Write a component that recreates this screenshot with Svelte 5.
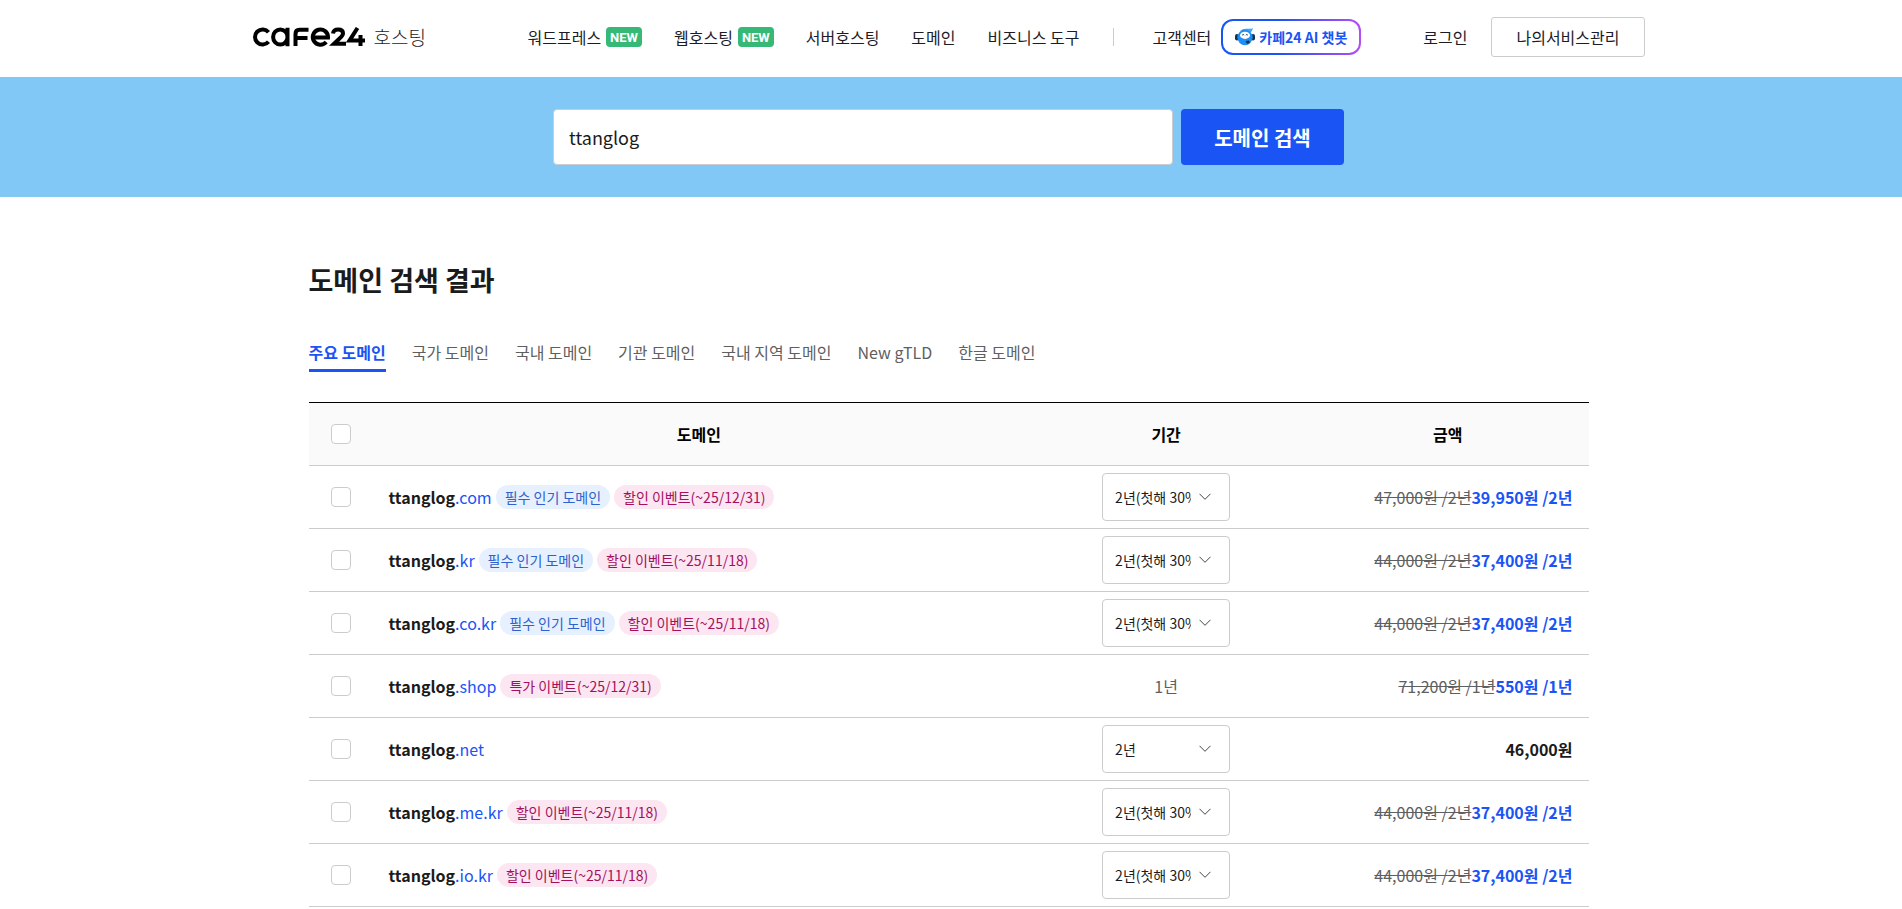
<script lang="ts">
  type Tag = { kind: "popular" | "event"; text: string };
  type Row = {
    ext: string;
    tags: Tag[];
    period: string;
    options: string[];
    before: string;
    price: string;
  };

  const popular: Tag = { kind: "popular", text: "필수 인기 도메인" };
  const sale = (date: string): Tag => ({ kind: "event", text: `할인 이벤트(~${date})` });
  const saleOptions = ["2년(첫해 30% 할인)", "1년"];

  const menus = [
    { name: "워드프레스", isNew: true },
    { name: "웹호스팅", isNew: true },
    { name: "서버호스팅", isNew: false },
    { name: "도메인", isNew: false },
    { name: "비즈니스 도구", isNew: false },
  ];

  const tabs = [
    "주요 도메인",
    "국가 도메인",
    "국내 도메인",
    "기관 도메인",
    "국내 지역 도메인",
    "New gTLD",
    "한글 도메인",
  ];

  const rows: Row[] = [
    { ext: ".com", tags: [popular, sale("25/12/31")], period: "", options: saleOptions, before: "47,000원 /2년", price: "39,950원 /2년" },
    { ext: ".kr", tags: [popular, sale("25/11/18")], period: "", options: saleOptions, before: "44,000원 /2년", price: "37,400원 /2년" },
    { ext: ".co.kr", tags: [popular, sale("25/11/18")], period: "", options: saleOptions, before: "44,000원 /2년", price: "37,400원 /2년" },
    { ext: ".shop", tags: [{ kind: "event", text: "특가 이벤트(~25/12/31)" }], period: "1년", options: [], before: "71,200원 /1년", price: "550원 /1년" },
    { ext: ".net", tags: [], period: "", options: ["2년", "1년"], before: "", price: "46,000원" },
    { ext: ".me.kr", tags: [sale("25/11/18")], period: "", options: saleOptions, before: "44,000원 /2년", price: "37,400원 /2년" },
    { ext: ".io.kr", tags: [sale("25/11/18")], period: "", options: saleOptions, before: "44,000원 /2년", price: "37,400원 /2년" },
  ];

  let keyword = $state("ttanglog");
  let searched = $state("ttanglog");
  let activeTab = $state(0);
  let checked = $state(rows.map(() => false));
  let allChecked = $derived(checked.every(Boolean));

  function toggleAll() {
    const next = !allChecked;
    checked = rows.map(() => next);
  }

  function search(event: SubmitEvent) {
    event.preventDefault();
    searched = keyword.trim();
  }
</script>

<header class="header">
  <div class="header-inner">
    <a class="logo" href="#home" aria-label="cafe24 호스팅">
      <svg width="113" height="20" viewBox="0 0 113 20" fill="none" stroke="#000" stroke-width="4" aria-hidden="true">
        <path d="M15.500 5.200A7.600 7.600 0 1 0 15.500 14.800" />
        <path d="M34.500 .8V19.200M34.500 10A7.200 7.600 0 1 0 20.100 10A7.200 7.600 0 1 0 34.500 10" />
        <path d="M42.500 19V7Q42.500 2.800 46.500 2.800H55.500M42.500 11H54.500" />
        <path d="M59.500 10.400H75A7.600 7.600 0 1 0 73.200 15" />
        <path d="M80 6.500Q80.500 2.500 85.200 2.500Q90 2.500 90 6.200Q90 8.500 86.500 11.500L81 16.800H93" />
        <path d="M104.500 1L96.500 13.600H112M107.500 8V19" />
      </svg>
      <span>호스팅</span>
    </a>
    <nav class="menu" aria-label="주 메뉴">
      {#each menus as menu}
        <a href="#menu">
          {menu.name}
          {#if menu.isNew}<em class="new">NEW</em>{/if}
        </a>
      {/each}
    </nav>
    <div class="support">
      <a href="#support">고객센터</a>
      <button type="button" class="chatbot">
        <svg width="20" height="18" viewBox="0 0 20 18" aria-hidden="true">
          <rect x="0" y="6" width="4" height="6.500" rx="2" fill="#13324f" />
          <rect x="16" y="6" width="4" height="6.500" rx="2" fill="#13324f" />
          <path d="M5 3Q8 .5 12 .8Q15 1 18 .2Q17.500 3 15 5Z" fill="#3fa9ff" />
          <ellipse cx="10" cy="9.400" rx="7.600" ry="7.800" fill="#1e90f5" />
          <ellipse cx="10" cy="7.300" rx="5" ry="3.600" fill="#fff" />
          <path d="M7.200 7.200Q8.200 5.600 9.200 7.200M10.800 7.200Q11.800 5.600 12.800 7.200" fill="none" stroke="#13324f" />
          <path d="M10.500 13L14 12.500L14.800 15L12 15.800Z" fill="#13324f" />
        </svg>
        카페24 AI 챗봇
      </button>
    </div>
    <div class="account">
      <a href="#login">로그인</a>
      <a class="my-service" href="#my">나의서비스관리</a>
    </div>
  </div>
</header>

<form class="search" onsubmit={search}>
  <input type="text" aria-label="도메인 이름" bind:value={keyword} />
  <button type="submit">도메인 검색</button>
</form>

<main class="content">
  <div class="result">
    <h1>도메인 검색 결과</h1>
    <nav class="tabs" aria-label="도메인 분류">
      {#each tabs as tab, i}
        <button type="button" class:active={activeTab === i} onclick={() => (activeTab = i)}>{tab}</button>
      {/each}
    </nav>

    <table>
      <colgroup>
        <col class="col-check" />
        <col />
        <col class="col-period" />
        <col class="col-price" />
      </colgroup>
      <thead>
        <tr>
          <th><input type="checkbox" aria-label="전체 선택" checked={allChecked} onchange={toggleAll} /></th>
          <th>도메인</th>
          <th>기간</th>
          <th>금액</th>
        </tr>
      </thead>
      <tbody>
        {#each rows as row, i}
          <tr>
            <td>
              <input type="checkbox" id="domain-{i}" bind:checked={checked[i]} />
            </td>
            <td>
              <div class="domain">
                <label for="domain-{i}"><strong>{searched}</strong>{row.ext}</label>
                {#each row.tags as tag}
                  <span class="tag {tag.kind}">{tag.text}</span>
                {/each}
              </div>
            </td>
            <td class="period">
              {#if row.options.length}
                <select aria-label="{searched}{row.ext} 기간">
                  {#each row.options as option}
                    <option>{option}</option>
                  {/each}
                </select>
              {:else}
                {row.period}
              {/if}
            </td>
            <td class="price">
              {#if row.before}<del>{row.before}</del>{/if}<strong class:sale={row.before}>{row.price}</strong>
            </td>
          </tr>
        {/each}
      </tbody>
    </table>
  </div>
</main>

<style>
  :global(body) {
    margin: 0;
    background: #fff;
    color: #1b1b1b;
    font-family: "Noto Sans CJK KR", "Noto Sans", sans-serif;
    font-size: 16px;
    line-height: 24px;
  }

  :global(*) {
    box-sizing: border-box;
  }

  a {
    color: inherit;
    text-decoration: none;
  }

  button,
  input,
  select {
    font-family: inherit;
  }

  button {
    cursor: pointer;
  }

  .header,
  .search,
  .content {
    padding-right: 5px;
  }

  .header-inner {
    display: flex;
    align-items: center;
    max-width: 1392px;
    height: 77px;
    margin: 0 auto;
    padding-bottom: 3px;
    color: #1c1c28;
    font-size: 16px;
  }

  .header a {
    white-space: nowrap;
  }

  .logo {
    display: flex;
    align-items: center;
    gap: 8px;
    width: 275px;
    font-size: 19px;
    font-weight: 300;
  }

  .menu {
    display: flex;
    gap: 32px;
  }

  .menu a {
    display: flex;
    align-items: center;
    gap: 5px;
  }

  .new {
    height: 20px;
    padding: 0 4px;
    border-radius: 4px;
    background: #36b876;
    color: #fff;
    font: 700 13px/21px Roboto, sans-serif;
  }

  .support {
    display: flex;
    align-items: center;
    gap: 10px;
    margin-left: 34px;
  }

  .support::before {
    content: "";
    width: 1px;
    height: 18px;
    margin-right: 28px;
    background: #ccc;
  }

  .chatbot {
    display: flex;
    align-items: center;
    gap: 4px;
    height: 36px;
    padding: 0 12px;
    border: 2px solid transparent;
    border-radius: 12px;
    background:
      linear-gradient(#fff, #fff) padding-box,
      linear-gradient(90deg, #1a54f5 40%, #b44df5) border-box;
    color: #1a54f5;
    font-size: 14px;
    font-weight: 700;
    white-space: nowrap;
  }

  .account {
    display: flex;
    align-items: center;
    gap: 24px;
    margin-left: auto;
  }

  .my-service {
    padding: 7px 24px;
    border: 1px solid #ccc;
    border-radius: 3px;
  }

  .search {
    display: flex;
    justify-content: center;
    gap: 8px;
    padding-top: 32px;
    padding-bottom: 32px;
    background: #82c8f7;
  }

  .search input {
    flex: 0 1 620px;
    min-width: 0;
    height: 56px;
    padding: 0 15px;
    border: 1px solid #ccc;
    border-radius: 4px;
    color: #1b1b1b;
    font-size: 18px;
  }

  .search button {
    width: 163px;
    border: 0;
    border-radius: 4px;
    background: #1a54f5;
    color: #fff;
    font-size: 20px;
    font-weight: 700;
  }

  .result {
    max-width: 1280px;
    margin: 0 auto;
    padding: 63px 0;
  }

  h1 {
    margin: 0;
    font-size: 27px;
    line-height: 40px;
  }

  .tabs {
    display: flex;
    gap: 26px;
    margin: 38px 0 30px;
  }

  .tabs button {
    padding: 2px 0 5px;
    border: 0;
    border-bottom: 3px solid transparent;
    background: none;
    color: #5f5f5f;
    font-size: 16px;
    line-height: 24px;
  }

  .tabs .active {
    border-color: #1a54f5;
    color: #1a54f5;
    font-weight: 700;
  }

  table {
    width: 100%;
    border-top: 1px solid #000;
    border-spacing: 0;
    table-layout: fixed;
  }

  .col-check {
    width: 64px;
  }

  .col-period,
  .col-price {
    width: 22%;
  }

  th,
  td {
    height: 63px;
    padding: 0 16px;
    border-bottom: 1px solid #ccc;
  }

  th {
    background: #fafafa;
    color: #000;
    font-weight: 700;
  }

  input[type="checkbox"] {
    display: block;
    width: 20px;
    height: 20px;
    margin: 0 auto;
    border: 1px solid #ccc;
    border-radius: 4px;
    background: #fff;
    appearance: none;
  }

  input[type="checkbox"]:checked {
    border-color: #1a54f5;
    background: #1a54f5;
  }

  .domain {
    display: flex;
    align-items: center;
    gap: 4px;
  }

  .domain label {
    color: #1a54f5;
  }

  .domain strong {
    color: #1b1b1b;
  }

  .tag {
    padding: 0 9px;
    border-radius: 12px;
    font-size: 14px;
  }

  .popular {
    background: #e6f0ff;
    color: #2f62cc;
  }

  .event {
    background: #fce6f1;
    color: #a3105f;
  }

  .period {
    color: #5f5f5f;
    text-align: center;
  }

  select {
    display: block;
    width: 128px;
    height: 48px;
    margin: 0 auto;
    padding: 0 38px 0 12px;
    border: 1px solid #ccc;
    border-radius: 4px;
    background: #fff url("data:image/svg+xml,%3Csvg xmlns='http://www.w3.org/2000/svg' width='12' height='8' fill='none' stroke='%23444'%3E%3Cpath d='M.5 .8L6 6.300L11.500 .8'/%3E%3C/svg%3E") no-repeat right 18px center;
    color: #1b1b1b;
    font-size: 14px;
    appearance: none;
  }

  .price {
    text-align: right;
  }

  .price del {
    color: #5f5f5f;
  }

  .price .sale {
    color: #1a54f5;
  }
</style>
